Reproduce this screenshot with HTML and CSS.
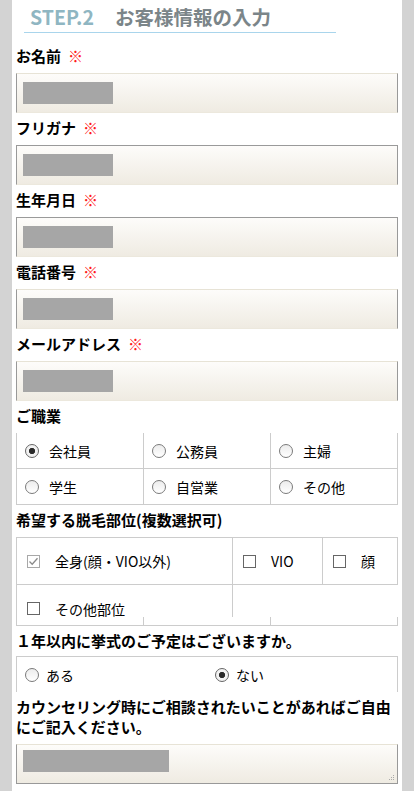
FILE: index.html
```html
<!DOCTYPE html>
<html lang="ja">
<head>
<meta charset="utf-8">
<title>STEP.2 お客様情報の入力</title>
<link rel="stylesheet" href="styles.css">
</head>
<body>
<div class="page">
  <h2 class="step-title"><span class="step-no">STEP.2</span><span class="step-name">お客様情報の入力</span></h2>
  <form class="form">
    <p class="label">お名前<span class="req">※</span></p>
    <div class="input"><span class="redact"></span></div>

    <p class="label">フリガナ<span class="req">※</span></p>
    <div class="input input--dark"><span class="redact"></span></div>

    <p class="label">生年月日<span class="req">※</span></p>
    <div class="input input--dark"><span class="redact"></span></div>

    <p class="label">電話番号<span class="req">※</span></p>
    <div class="input"><span class="redact"></span></div>

    <p class="label">メールアドレス<span class="req">※</span></p>
    <div class="input"><span class="redact"></span></div>

    <p class="label">ご職業</p>
    <div class="jobs">
      <div class="cell"><span class="radio radio--on"></span><span>会社員</span></div>
      <div class="cell"><span class="radio"></span><span>公務員</span></div>
      <div class="cell"><span class="radio"></span><span>主婦</span></div>
      <div class="cell"><span class="radio"></span><span>学生</span></div>
      <div class="cell"><span class="radio"></span><span>自営業</span></div>
      <div class="cell"><span class="radio"></span><span>その他</span></div>
    </div>

    <p class="label">希望する脱毛部位(複数選択可)</p>
    <div class="parts">
      <div class="parts-row">
        <div class="pcell"><span class="check check--on"><svg viewBox="0 0 13 13" width="13" height="13"><path d="M2.5 6.5 L5.2 9.2 L10.5 3.2" fill="none" stroke="#8a8a8a" stroke-width="1.3"/></svg></span><span>全身(顔・VIO以外)</span></div>
        <div class="pcell"><span class="check"></span><span>VIO</span></div>
        <div class="pcell"><span class="check"></span><span>顔</span></div>
      </div>
      <div class="parts-row2">
        <div class="pcell pcell--other"><span class="check"></span><span>その他部位</span></div>
      </div>
      <div class="parts-tail">
        <div class="tcell"></div>
        <div class="tcell"></div>
        <div class="tcell"></div>
      </div>
    </div>

    <p class="label label--q">１年以内に挙式のご予定はございますか。</p>
    <div class="wedding">
      <div class="wcell"><span class="radio"></span><span>ある</span></div>
      <div class="wcell"><span class="radio radio--on"></span><span>ない</span></div>
    </div>

    <p class="label">カウンセリング時にご相談されたいことがあればご自由にご記入ください。</p>
    <div class="textarea">
      <span class="redact redact--wide"></span>
      <svg class="grip" viewBox="0 0 6 6" width="6" height="6"><rect x="4" y="0" width="1" height="1" fill="#aaa"/><rect x="2" y="2" width="1" height="1" fill="#aaa"/><rect x="4" y="2" width="1" height="1" fill="#aaa"/><rect x="0" y="4" width="1" height="1" fill="#aaa"/><rect x="2" y="4" width="1" height="1" fill="#aaa"/><rect x="4" y="4" width="1" height="1" fill="#aaa"/></svg>
    </div>

    <p class="label">ご希望の店舗<span class="req">※</span></p>
  </form>
</div>
</body>
</html>
```
FILE: styles.css
```css
* { box-sizing: border-box; }
html, body { margin: 0; padding: 0; }
body {
  background: #d3d3d3;
  font-family: "Noto Sans CJK JP", "Noto Sans", sans-serif;
  color: #111;
}
.page {
  width: 390px;
  margin: 0 12px;
  background: #fff;
  min-height: 791px;
  overflow: hidden;
}
.step-title {
  margin: 0 0 0 12px;
  width: 312px;
  padding: 5px 0 3px 6px;
  border-bottom: 1px solid #a9d5ec;
  font-size: 19.5px;
  line-height: 24px;
  font-weight: bold;
  display: flex;
  gap: 21px;
}
.step-no { color: #8fb6c2; }
.step-name { color: #7b8589; }

.form {
  margin-top: 8px;
  padding: 0 4px;
}
.label {
  margin: 0;
  padding: 5px 0 7px;
  font-size: 15px;
  line-height: 20px;
  font-weight: bold;
  color: #000;
}
.label--q { padding-bottom: 5px; }
.req {
  color: #ff1a1a;
  margin-left: 7px;
  font-weight: bold;
}
.input, .textarea {
  height: 40px;
  border: 1px solid #999;
  border-top-color: #e7e3d6;
  border-bottom-color: #ece8dd;
  background: linear-gradient(#fdfcfa, #efebe2);
  padding: 0 6px;
  display: flex;
  align-items: center;
}
.input--dark { border-top-color: #9a9a9a; }
.redact {
  display: block;
  width: 90px;
  height: 22px;
  background: #a6a6a6;
}
.textarea {
  position: relative;
  align-items: flex-start;
  padding-top: 5px;
  border-bottom-color: #999;
}
.redact--wide { width: 146px; }
.grip {
  position: absolute;
  right: 2px;
  bottom: 2px;
}

.jobs {
  display: grid;
  grid-template-columns: repeat(3, 127px);
  border-left: 1px solid #ccc;
}
.cell, .wcell, .pcell {
  display: flex;
  align-items: center;
  font-size: 14px;
  line-height: 20px;
  color: #000;
}
.cell {
  height: 36px;
  border-right: 1px solid #ccc;
  border-bottom: 1px solid #ccc;
  padding-left: 8px;
  gap: 10px;
}
.radio {
  flex: none;
  width: 14px;
  height: 14px;
  border-radius: 50%;
  border: 1.5px solid #7a7a7a;
  background: linear-gradient(#ececec, #fff);
}
.radio--on {
  border-color: #666;
  background: radial-gradient(circle, #2a2a2a 0 2.8px, #f2f2f2 3.4px);
}

.parts {
  border-left: 1px solid #ccc;
  border-top: 1px solid #ccc;
}
.parts-row {
  display: grid;
  grid-template-columns: 216px 90px 75px;
}
.pcell {
  height: 47px;
  border-right: 1px solid #ccc;
  border-bottom: 1px solid #ccc;
  padding-left: 10px;
  gap: 15px;
}
.parts-row2 {
  display: grid;
  grid-template-columns: 216px;
}
.pcell--other {
  height: 32px;
  border-bottom: none;
  align-items: flex-start;
  padding-top: 14px;
}
.pcell--other .check { margin-top: 3px; }
.check {
  flex: none;
  width: 13px;
  height: 13px;
  border: 1px solid #666;
  background: #fff;
  display: block;
}
.check svg { display: block; margin: -1px; }
.check--on { border-color: #a8a8a8; }
.parts-tail {
  display: grid;
  grid-template-columns: repeat(3, 127px);
}
.tcell {
  height: 9px;
  border-right: 1px solid #ccc;
  border-bottom: 1px solid #ccc;
}

.wedding {
  display: grid;
  grid-template-columns: 1fr 1fr;
  height: 36px;
  border: 1px solid #ccc;
  border-bottom: none;
}
.wcell {
  padding-left: 8px;
  gap: 7px;
}
```
